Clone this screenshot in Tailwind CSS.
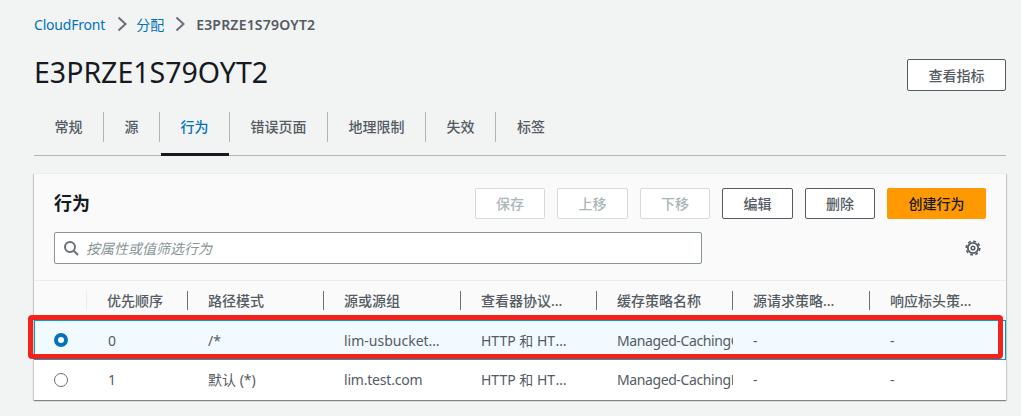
<!DOCTYPE html>
<html lang="zh-CN">
<head>
    <meta charset="UTF-8">
    <title>CloudFront</title>
    <script src="https://cdn.jsdelivr.net/npm/@tailwindcss/browser@4"></script>
</head>
<body class="bg-[#f2f3f3] h-[416px] overflow-hidden font-['Noto_Sans','Noto_Sans_CJK_SC',sans-serif] text-[14px] text-[#545b64]">
    <div class="pl-[34px] pr-[15px]">
        <!-- Breadcrumb -->
        <nav class="h-[20px] mt-[14px] flex items-center">
            <a class="text-[#0073bb] tracking-[-0.2px]">CloudFront</a>
            <svg class="w-[10px] h-[16px] ml-[12px] mr-[9px]" viewBox="0 0 10 16" fill="none" stroke="#687078" stroke-width="2"><path d="M1.5 1.5 8.5 8 1.5 14.5"/></svg>
            <a class="text-[#0073bb]">分配</a>
            <svg class="w-[10px] h-[16px] ml-[11px] mr-[11px]" viewBox="0 0 10 16" fill="none" stroke="#687078" stroke-width="2"><path d="M1.5 1.5 8.5 8 1.5 14.5"/></svg>
            <span class="font-semibold tracking-[0.2px]">E3PRZE1S79OYT2</span>
        </nav>

        <!-- Title -->
        <div class="flex justify-between items-start">
            <h1 class="text-[28.5px] leading-[36px] text-[#16191f] mt-[20px]">E3PRZE1S79OYT2</h1>
            <button class="w-[99px] h-[32px] mt-[25px] bg-white border border-[#545b64] rounded-[2px] font-medium">查看指标</button>
        </div>

        <!-- Tabs -->
        <div class="flex h-[44px] mt-[21px] border-b border-[#aab7b8] font-medium">
            <div class="w-[70px] h-[30px] pb-px flex items-center justify-center border-r border-[#aab7b8]">常规</div>
            <div class="w-[56px] h-[30px] pb-px flex items-center justify-center border-r border-[#aab7b8]">源</div>
            <div class="relative w-[70px] h-[30px] pb-px flex items-center justify-center border-r border-[#aab7b8] text-[#0073bb]">
                行为
                <span class="absolute left-px right-0 top-[41px] h-[3px] bg-[#16191f]"></span>
            </div>
            <div class="w-[98px] h-[30px] pb-px flex items-center justify-center border-r border-[#aab7b8]">错误页面</div>
            <div class="w-[98px] h-[30px] pb-px flex items-center justify-center border-r border-[#aab7b8]">地理限制</div>
            <div class="w-[70px] h-[30px] pb-px flex items-center justify-center border-r border-[#aab7b8]">失效</div>
            <div class="w-[70px] h-[30px] pb-px flex items-center justify-center">标签</div>
        </div>

        <!-- Behaviors card -->
        <div class="relative mt-[17px] h-[227px] bg-white border-t border-[#eaeded] shadow-[0_1px_1px_0_rgba(0,28,36,0.3),1px_1px_1px_0_rgba(0,28,36,0.15),-1px_1px_1px_0_rgba(0,28,36,0.15)]">
            <div class="bg-[#fafafa] h-[106px] px-[20px] pt-[14px]">
                <div class="flex justify-between items-center h-[31px]">
                    <h2 class="text-[18px] font-bold text-[#16191f]">行为</h2>
                    <div class="flex gap-[12px] font-medium">
                        <button class="w-[70px] h-[31px] border border-[#d5dbdb] rounded-[2px] bg-white text-[#aab7b8]">保存</button>
                        <button class="w-[71px] h-[31px] border border-[#d5dbdb] rounded-[2px] bg-white text-[#aab7b8]">上移</button>
                        <button class="w-[70px] h-[31px] border border-[#d5dbdb] rounded-[2px] bg-white text-[#aab7b8]">下移</button>
                        <button class="w-[71px] h-[31px] border border-[#545b64] rounded-[2px] bg-white">编辑</button>
                        <button class="w-[70px] h-[31px] border border-[#545b64] rounded-[2px] bg-white">删除</button>
                        <button class="w-[99px] h-[31px] rounded-[2px] bg-[#ff9900] text-[#16191f]">创建行为</button>
                    </div>
                </div>
                <div class="flex justify-between items-center mt-[13px] pr-[5px]">
                    <div class="w-[648px] h-[32px] flex items-center gap-[7px] px-[8px] bg-white border border-[#879596] rounded-[2px]">
                        <svg class="w-[16px] h-[16px]" viewBox="0 0 16 16" fill="none" stroke="#687078" stroke-width="2"><circle cx="7" cy="7" r="5"/><path d="m10.8 10.8 4.2 4.2"/></svg>
                        <span class="italic text-[#879596]">按属性或值筛选行为</span>
                    </div>
                    <svg class="w-[16px] h-[16px]" viewBox="0 0 16 16" fill="none" stroke="#545b64"><circle cx="8" cy="8" r="5.2" stroke-width="1.8"/><circle cx="8" cy="8" r="6.8" stroke-width="1.6" stroke-dasharray="2.9 2.44"/><circle cx="8" cy="8" r="1.8" stroke-width="1.5"/></svg>
                </div>
            </div>

            <!-- Table header -->
            <div class="grid grid-cols-[53px_100px_136px_137px_136px_136px_137px_1fr] h-[40px] items-center bg-[#fafafa] border-t border-[#eaeded] font-medium">
                <div class="h-[19px] border-r border-[#eaeded]"></div>
                <div class="pl-[20px]">优先顺序</div>
                <div class="h-[19px] leading-[19px] pl-[20px] border-l border-[#687078]">路径模式</div>
                <div class="h-[19px] leading-[19px] pl-[20px] border-l border-[#687078]">源或源组</div>
                <div class="h-[19px] leading-[19px] pl-[20px] pr-[28px] border-l border-[#687078] truncate">查看器协议位置</div>
                <div class="h-[19px] leading-[19px] pl-[20px] border-l border-[#687078]">缓存策略名称</div>
                <div class="h-[19px] leading-[19px] pl-[20px] pr-[30px] border-l border-[#687078] truncate">源请求策略名称</div>
                <div class="h-[19px] leading-[19px] pl-[20px] pr-[31px] border-l border-[#687078] truncate">响应标头策略名称</div>
            </div>

            <!-- Rows -->
            <div class="grid grid-cols-[53px_100px_136px_137px_136px_136px_137px_1fr] h-[40px] items-center bg-[#f1faff] border border-[#00a1c9]">
                <div class="pl-[19px]"><span class="block w-[14px] h-[14px] rounded-full border-[4px] border-[#0073bb] bg-white"></span></div>
                <div class="pl-[20px]">0</div>
                <div class="pl-[20px]">/*</div>
                <div class="pl-[20px] pr-[19px] truncate">lim-usbucket.s3.amazonaws.com</div>
                <div class="pl-[20px] pr-[26px] truncate">HTTP 和 HTTPS</div>
                <div class="pl-[20px] overflow-hidden whitespace-nowrap tracking-[-0.4px]">Managed-CachingOptimized</div>
                <div class="pl-[20px]">-</div>
                <div class="pl-[20px]">-</div>
            </div>
            <div class="grid grid-cols-[53px_100px_136px_137px_136px_136px_137px_1fr] h-[39px] items-center bg-white px-px">
                <div class="pl-[19px]"><span class="block w-[14px] h-[14px] rounded-full border border-[#687078] bg-white"></span></div>
                <div class="pl-[20px]">1</div>
                <div class="pl-[20px]">默认 (*)</div>
                <div class="pl-[20px] pr-[19px] truncate tracking-[-0.2px]">lim.test.com</div>
                <div class="pl-[20px] pr-[26px] truncate">HTTP 和 HTTPS</div>
                <div class="pl-[20px] overflow-hidden whitespace-nowrap tracking-[-0.4px]">Managed-CachingDisabled</div>
                <div class="pl-[20px]">-</div>
                <div class="pl-[20px]">-</div>
            </div>

            <!-- Red annotation box -->
            <div class="absolute left-[-6px] top-[141px] w-[975px] h-[44px] border-[5px] border-[#f5211b] rounded-[4px]"></div>
        </div>
    </div>
</body>
</html>
